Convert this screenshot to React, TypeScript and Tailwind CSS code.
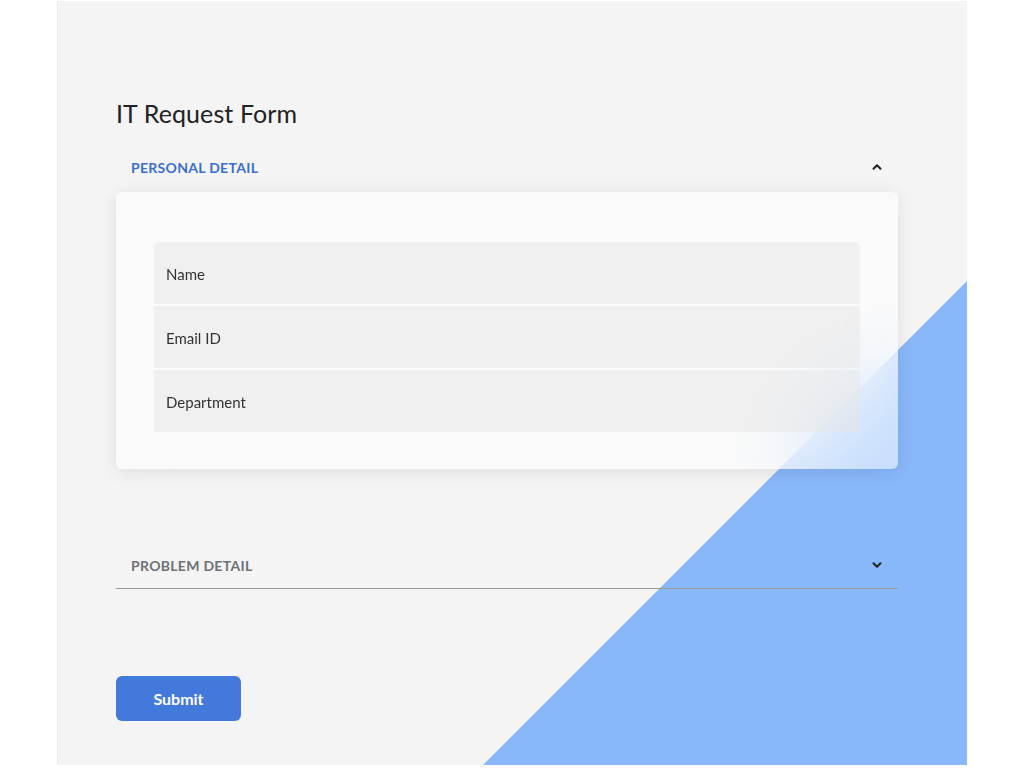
import { ChevronUp, ChevronDown } from "lucide-react";

const fields = ["Name", "Email ID", "Department"];

export default function App() {
  return (
    <div className="min-h-screen w-full bg-white font-['Lato',sans-serif]">
      <div className="relative ml-[57px] mt-px w-[910px] h-[764px] overflow-hidden bg-[#f4f4f4] border-l border-[#ececec]">
        {/* decorative blue triangle */}
        <div className="absolute right-0 bottom-0 w-[484px] h-[484px] bg-[#88b7fa] [clip-path:polygon(100%_0,100%_100%,0_100%)]" />

        <div className="relative flex flex-col pl-[58px] pt-[96px] w-[840px]">
          <h1 className="text-[25px] leading-8 text-[#222] tracking-[0.1px]">IT Request Form</h1>

          {/* Personal detail */}
          <div className="mt-[20px] flex items-center justify-between h-[36px] pl-[15px] pr-[14px]">
            <span className="text-[14px] font-bold text-[#3a6fc9] tracking-[0.3px]">PERSONAL DETAIL</span>
            <ChevronUp className="w-[14px] h-[14px] text-[#222]" strokeWidth={3.5} />
          </div>

          <div className="mt-[7px] w-[782px] rounded-md bg-white/55 backdrop-blur-2xl shadow-[0_3px_18px_rgba(0,0,0,0.09)] px-[38px] pt-[50px] pb-[37px]">
            <div className="flex flex-col gap-[2px] rounded-t-md overflow-hidden">
              {fields.map((f) => (
                <div key={f} className="h-[62px] flex items-center px-3 pt-[3px] bg-[#e6e6e6]/50 text-[15px] text-[#333]">
                  {f}
                </div>
              ))}
            </div>
          </div>

          {/* Problem detail */}
          <div className="mt-[77px] w-[782px] flex items-center justify-between h-[43px] pl-[15px] pr-[14px] pb-[4px] border-b border-[#9a9a9a]">
            <span className="text-[14px] font-bold text-[#6e7177] tracking-[0.3px]">PROBLEM DETAIL</span>
            <ChevronDown className="w-[14px] h-[14px] text-[#222]" strokeWidth={3.5} />
          </div>

          <button className="mt-[87px] w-[125px] h-[45px] rounded-md bg-[#4479dc] text-white text-[16px] font-bold">
            Submit
          </button>
        </div>
      </div>
    </div>
  );
}
